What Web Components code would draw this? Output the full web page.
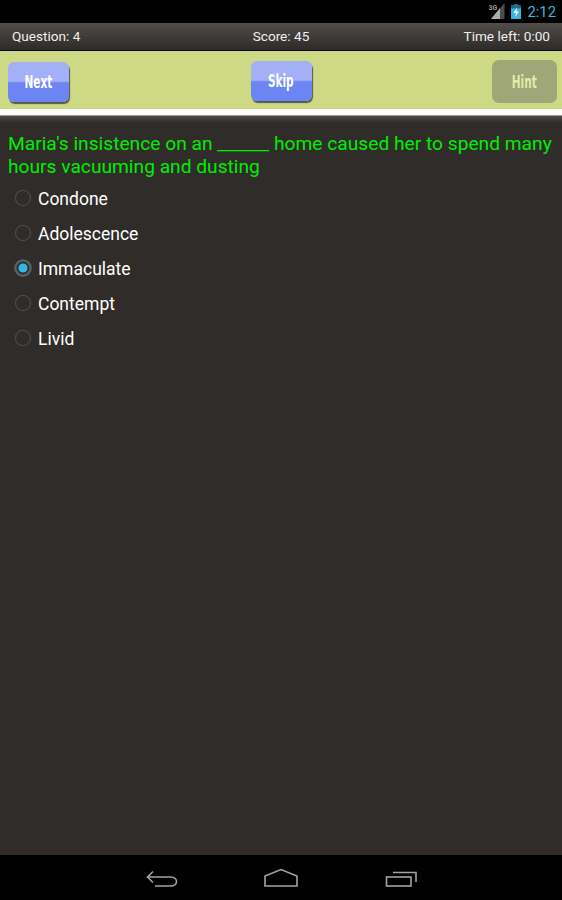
<!DOCTYPE html>
<html>
<head>
<meta charset="utf-8">
<title>Quiz</title>
<style>
    html, body { margin: 0; height: 100%; background: #302c2a; }
    body { display: flex; flex-direction: column; height: 900px; overflow: hidden; font-family: Roboto, sans-serif; }
</style>
</head>
<body>
<status-bar></status-bar>
<score-bar question="4" score="45" time="0:00"></score-bar>
<action-bar>
    <quiz-button label="Next" style="margin-top: 11px"></quiz-button>
    <quiz-button label="Skip" style="margin-top: 10px; margin-left: 1px"></quiz-button>
    <quiz-button label="Hint" disabled style="margin-top: 9px"></quiz-button>
</action-bar>
<question-panel text="Maria's insistence on an ______ home caused her to spend many hours vacuuming and dusting">
    <quiz-option>Condone</quiz-option>
    <quiz-option>Adolescence</quiz-option>
    <quiz-option checked>Immaculate</quiz-option>
    <quiz-option>Contempt</quiz-option>
    <quiz-option>Livid</quiz-option>
</question-panel>
<nav-bar></nav-bar>

<script>
class StatusBar extends HTMLElement {
    constructor() {
        super();
        this.attachShadow({ mode: 'open' });
        this.shadowRoot.innerHTML = `
            <style>
                :host { display: flex; flex: 0 0 23px; height: 23px; background: #000; align-items: flex-start; justify-content: flex-end; padding-right: 6px; box-sizing: border-box; }
                .net { position: relative; width: 18px; height: 18px; margin-right: 6px; margin-top: 2px; }
                .net span { position: absolute; left: 1px; top: 2px; font: 700 7px/8px Roboto, sans-serif; color: #9a9a9a; }
                svg { display: block; }
                .bat { margin-top: 4px; }
                .time { font: 400 14.8px/25px Roboto, sans-serif; color: #33b5e5; margin-left: 6px; }
            </style>
            <div class="net">
                <span>3G</span>
                <svg width="18" height="18" viewBox="0 0 18 18"><path d="M17.5 1V17H4Z" fill="#4d4d4d"/><path d="M13 6V17H4Z" fill="#ababab"/></svg>
            </div>
            <svg class="bat" width="10" height="15" viewBox="0 0 10 15">
                <rect x="3" y="0" width="4" height="1.5" fill="#1c6a88"/>
                <rect x="0" y="1.5" width="10" height="13.5" fill="#33b5e5"/>
                <rect x="0" y="1.5" width="10" height="3" fill="#1c6a88"/>
                <path d="M6 3.5L2.5 9H5L4 13.5L7.8 7.5H5.5Z" fill="#fff"/>
            </svg>
            <span class="time">2:12</span>
        `;
    }
}

class ScoreBar extends HTMLElement {
    constructor() {
        super();
        this.attachShadow({ mode: 'open' });
    }

    connectedCallback() {
        this.shadowRoot.innerHTML = `
            <style>
                :host {
                    display: grid;
                    grid-template-columns: 1fr auto 1fr;
                    flex: 0 0 28px;
                    height: 28px;
                    box-sizing: border-box;
                    padding: 0 12px;
                    align-items: center;
                    background: linear-gradient(#514d4a, #2d2a28);
                    border-bottom: 1px solid #0b0b20;
                    color: #f0f0f0;
                    font: 400 13.6px/15px Roboto, sans-serif;
                }
                .right { text-align: right; }
            </style>
            <span>Question: ${this.getAttribute('question')}</span>
            <span>Score: ${this.getAttribute('score')}</span>
            <span class="right">Time left: ${this.getAttribute('time')}</span>
        `;
    }
}

class ActionBar extends HTMLElement {
    constructor() {
        super();
        this.attachShadow({ mode: 'open' });
        this.shadowRoot.innerHTML = `
            <style>
                :host {
                    display: flex;
                    flex: 0 0 58px;
                    height: 58px;
                    box-sizing: border-box;
                    padding: 0 5px 0 8px;
                    justify-content: space-between;
                    align-items: flex-start;
                    background: #cdd984;
                }
            </style>
            <slot></slot>
        `;
    }
}

class QuizButton extends HTMLElement {
    constructor() {
        super();
        this.attachShadow({ mode: 'open' });
    }

    connectedCallback() {
        this.shadowRoot.innerHTML = `
            <style>
                :host { display: block; }
                .btn {
                    position: relative;
                    width: 61px;
                    height: 40px;
                    box-sizing: border-box;
                    border-radius: 6px;
                    background: linear-gradient(#a3b0f6 0, #a3b0f6 48%, #6c85f3 52%, #6c85f3 100%);
                    box-shadow: 1px 2px 1px #54584a;
                    display: flex;
                    align-items: center;
                    justify-content: center;
                    color: #fff;
                }
                .btn span {
                    display: block;
                    font: 700 18px/20px "DejaVu Sans Condensed", "DejaVu Sans", sans-serif;
                    transform: scaleX(.65);
                }
                :host([disabled]) .btn {
                    width: 65px;
                    height: 43px;
                    background: #9fa678;
                    box-shadow: none;
                    color: #e3eaa9;
                    border-radius: 7px;
                }
            </style>
            <div class="btn"><span>${this.getAttribute('label')}</span></div>
        `;
    }
}

class QuestionPanel extends HTMLElement {
    constructor() {
        super();
        this.attachShadow({ mode: 'open' });
    }

    connectedCallback() {
        this.shadowRoot.innerHTML = `
            <style>
                :host {
                    display: block;
                    flex: 1 1 auto;
                    background: #302c2a;
                }
                .sep { height: 6px; background: #fff; border-bottom: 1px solid #999; }
                .fade { height: 7px; background: linear-gradient(#4b4846, #302c2a); }
                .text {
                    margin: 0;
                    padding: 9px 0 0 8px;
                    color: #00ee00;
                    font: 400 19.2px/23px Roboto, sans-serif;
                }
                .options { display: flex; flex-direction: column; padding-top: 2px; }
            </style>
            <div class="sep"></div>
            <div class="fade"></div>
            <p class="text">${this.getAttribute('text')}</p>
            <div class="options"><slot></slot></div>
        `;
    }
}

class QuizOption extends HTMLElement {
    constructor() {
        super();
        this.attachShadow({ mode: 'open' });
        this.shadowRoot.innerHTML = `
            <style>
                :host {
                    display: flex;
                    height: 35px;
                    align-items: center;
                    padding-left: 14px;
                    color: #fff;
                    font: 400 17.5px/21px Roboto, sans-serif;
                }
                svg { display: block; margin-right: 6px; }
                .label { padding-top: 4px; }
                .on { display: none; }
                :host([checked]) .on { display: inline; }
                :host([checked]) .ring { stroke: #55626a; stroke-width: 2.4; }
            </style>
            <svg width="18" height="18" viewBox="0 0 18 18">
                <circle class="ring" cx="9" cy="9" r="7.6" fill="none" stroke="#4a4745" stroke-width="1.4"/>
                <circle class="on" cx="9" cy="9" r="4.6" fill="#33b5e5"/>
            </svg>
            <span class="label"><slot></slot></span>
        `;
    }
}

class NavBar extends HTMLElement {
    constructor() {
        super();
        this.attachShadow({ mode: 'open' });
        this.shadowRoot.innerHTML = `
            <style>
                :host { display: block; flex: 0 0 45px; height: 45px; background: #000; }
                svg { display: block; }
            </style>
            <svg width="562" height="45" viewBox="0 0 562 45" fill="none" stroke="#a3a3a3" stroke-width="1.6">
                <path d="M147.5 22H170.5C178.5 22 178.5 31 170.5 31H155"/>
                <path d="M153 16.5L147.5 22L153 27.5"/>
                <path d="M265 31V21L281 14.5L297 21V31Z"/>
                <rect x="386.5" y="22" width="24.5" height="9"/>
                <path d="M393 17.5H416V27"/>
            </svg>
        `;
    }
}

customElements.define('status-bar', StatusBar);
customElements.define('score-bar', ScoreBar);
customElements.define('action-bar', ActionBar);
customElements.define('quiz-button', QuizButton);
customElements.define('question-panel', QuestionPanel);
customElements.define('quiz-option', QuizOption);
customElements.define('nav-bar', NavBar);
</script>
</body>
</html>
